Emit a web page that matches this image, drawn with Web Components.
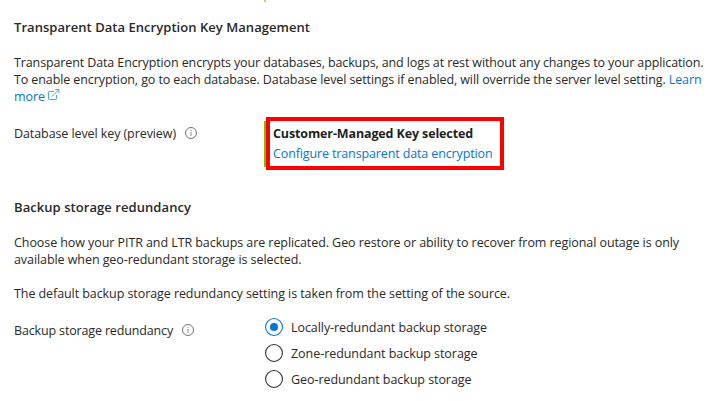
<!DOCTYPE html>
<html lang="en">
<head>
<meta charset="utf-8">
<title>Transparent Data Encryption</title>
<style>
html, body { margin: 0; background: #fff; }
body { width: 728px; height: 401px; overflow: hidden; }
</style>
</head>
<body>
<settings-page></settings-page>
<script>
const FONT = '"Open Sans", "Noto Sans", sans-serif';

/* One line of text, tracked so that it fills the width given in its attribute. */
class TextLine extends HTMLElement {
  connectedCallback() {
    const root = this.attachShadow({ mode: 'open' });
    root.innerHTML = `<style>
      :host { display: block; height: 17px; line-height: 17px; white-space: nowrap; }
      span { display: inline-block; height: 17px; }
    </style><span><slot></slot></span>`;
    const span = root.querySelector('span');
    const want = parseFloat(this.getAttribute('fit'));
    const n = this.textContent.length;
    if (want) span.style.letterSpacing = ((want - span.getBoundingClientRect().width) / n) + 'px';
  }
}

class InfoIcon extends HTMLElement {
  connectedCallback() {
    this.attachShadow({ mode: 'open' }).innerHTML = `<style>
      :host { display: block; width: 12px; height: 12px; } svg { display: block; }
    </style><svg width="12" height="12" viewBox="0 0 12 12">
      <circle cx="6" cy="6" r="5.5" fill="none" stroke="#6b6967" stroke-width=".95"/>
      <rect x="5.5" y="2.9" width="1" height="1.1" fill="#8a8886"/>
      <rect x="5.5" y="4.9" width="1" height="4.1" fill="#8a8886"/></svg>`;
  }
}

class ExternalIcon extends HTMLElement {
  connectedCallback() {
    this.attachShadow({ mode: 'open' }).innerHTML = `<style>
      :host { display: block; width: 12px; height: 12px; } svg { display: block; }
    </style><svg width="12" height="12" viewBox="0 0 12 12" fill="none" stroke="#2b8cdb" stroke-width=".8">
      <path d="M6 2.5H1.3Q.5 2.5 .5 3.3V9.7Q.5 10.5 1.3 10.5H7.7Q8.5 10.5 8.5 9.7V6"/>
      <path d="M4 7.5L10.8 .7M7.3 .5H10.9V4"/></svg>`;
  }
}

class RadioOption extends HTMLElement {
  connectedCallback() {
    const on = this.hasAttribute('checked');
    const c = on ? '#0078d4' : '#323130';
    this.attachShadow({ mode: 'open' }).innerHTML = `<style>
      :host { display: flex; gap: 8px; height: 18px; }
      svg { display: block; flex: none; }
      text-line { margin-top: 1px; }
    </style><svg width="18" height="18" viewBox="0 0 18 18">
      <circle cx="9" cy="9" r="8.45" fill="#fff" stroke="${c}" stroke-width="1.1"/>
      ${on ? `<circle cx="9" cy="9" r="4" fill="${c}"/>` : ''}
    </svg><text-line fit="${this.getAttribute('fit')}">${this.getAttribute('label')}</text-line>`;
  }
}

/* A field label with its info mark, and the field's content beside it. */
class FormRow extends HTMLElement {
  connectedCallback() {
    this.attachShadow({ mode: 'open' }).innerHTML = `<style>
      :host { display: grid; grid-template-columns: 251px 1fr; align-items: start; }
      .label { display: flex; gap: 9px; padding-top: var(--label-top, 0px); }
      info-icon { margin-top: 2px; }
    </style><div class="label"><text-line fit="${this.getAttribute('fit')}">${this.getAttribute('label')}</text-line><info-icon></info-icon></div>
    <div><slot></slot></div>`;
  }
}

class KeyCallout extends HTMLElement {
  connectedCallback() {
    this.attachShadow({ mode: 'open' }).innerHTML = `<style>
      :host { display: block; position: relative; box-sizing: border-box; width: 238px; height: 53px;
        margin-left: 1px; border: 4px solid #f00; padding: 4px 0 0 3px; }
      :host::before { content: ""; position: absolute; left: -6px; top: 0; width: 2px; height: 46px; background: #7fba00; }
      .state { font-weight: 700; color: #201f1e; margin-bottom: 3px; }
      .link { color: #0078d4; }
    </style><text-line class="state" fit="200">Customer-Managed Key selected</text-line>
    <text-line class="link" fit="219.5">Configure transparent data encryption</text-line>`;
  }
}

class SettingsPage extends HTMLElement {
  connectedCallback() {
    this.attachShadow({ mode: 'open' }).innerHTML = `<style>
      :host { display: block; position: relative; box-sizing: border-box; width: 728px; height: 401px;
        padding: 19px 0 0 14px; font: 400 12.5px ${FONT}; color: #292827; background: #fff; }
      :host::before { content: ""; position: absolute; left: 264px; top: 0; width: 2px; height: 2px; background: #b5d96b; }
      .h { font-weight: 600; font-size: 13px; }
      .intro { margin-top: 18px; }
      a { color: #0078d4; }
      .more { display: flex; gap: 3px; color: #0078d4; }
      .more external-icon { margin-top: 1px; }
      .key { margin-top: 12px; --label-top: 8px; }
      .h2 { margin-top: 29px; }
      .choose { margin-top: 18px; }
      .default { margin-top: 17px; }
      .backup { margin-top: 16px; --label-top: 4px; }
      .options { display: grid; gap: 8px; }
    </style>
    <text-line class="h" fit="296">Transparent Data Encryption Key Management</text-line>
    <div class="intro">
      <text-line fit="689.5">Transparent Data Encryption encrypts your databases, backups, and logs at rest without any changes to your application.</text-line>
      <text-line fit="687.5">To enable encryption, go to each database. Database level settings if enabled, will override the server level setting. <a>Learn</a></text-line>
      <div class="more"><text-line fit="31">more</text-line><external-icon></external-icon></div>
    </div>
    <form-row class="key" label="Database level key (preview)" fit="162"><key-callout></key-callout></form-row>
    <text-line class="h h2" fit="177">Backup storage redundancy</text-line>
    <div class="choose">
      <text-line fit="665">Choose how your PITR and LTR backups are replicated. Geo restore or ability to recover from regional outage is only</text-line>
      <text-line fit="287.5">available when geo-redundant storage is selected.</text-line>
    </div>
    <text-line class="default" fit="496">The default backup storage redundancy setting is taken from the setting of the source.</text-line>
    <form-row class="backup" label="Backup storage redundancy" fit="159"><div class="options">
      <radio-option checked fit="196" label="Locally-redundant backup storage"></radio-option>
      <radio-option fit="186.5" label="Zone-redundant backup storage"></radio-option>
      <radio-option fit="180.5" label="Geo-redundant backup storage"></radio-option>
    </div></form-row>`;
  }
}

customElements.define('text-line', TextLine);
customElements.define('info-icon', InfoIcon);
customElements.define('external-icon', ExternalIcon);
customElements.define('radio-option', RadioOption);
customElements.define('form-row', FormRow);
customElements.define('key-callout', KeyCallout);
customElements.define('settings-page', SettingsPage);
</script>
</body>
</html>
